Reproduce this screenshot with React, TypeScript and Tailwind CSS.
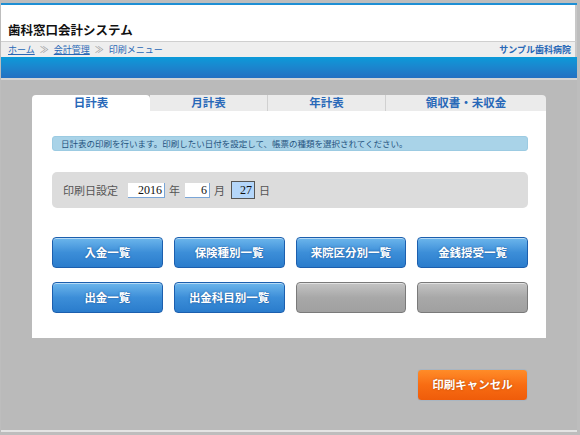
import React from "react";

const font = { fontFamily: '"Noto Sans CJK JP", "Noto Sans", sans-serif' };

function BlueBtn({ label }: { label: string }) {
  return (
    <div className="h-[31px] rounded-[4px] border border-[#1c5fae] bg-gradient-to-b from-[#6cb6ec] via-[#3c8ed8] to-[#2a7ccc] flex items-center justify-center text-white text-[11.5px] font-bold [text-shadow:0_0_2px_rgba(0,40,100,0.6)] shadow-[inset_0_1px_0_rgba(255,255,255,0.5)]">
      {label}
    </div>
  );
}

function GrayBtn() {
  return (
    <div className="h-[31px] rounded-[4px] border border-[#7a7a7a] bg-gradient-to-b from-[#c4c4c4] via-[#a8a8a8] to-[#a0a0a0] shadow-[inset_0_1px_0_rgba(255,255,255,0.5)]" />
  );
}

export default function App() {
  return (
    <div className="w-[580px] h-[435px] bg-[#bdbdbd] pt-[3px] pl-[1px] pr-[3px] overflow-hidden" style={font}>
      <div className="w-[576px] h-[429px] border-b-2 border-[#e4e4e4] bg-[#bababa] flex flex-col">
        <div className="h-[2px] bg-[#1e8fd4]" />
        <div className="h-[36px] bg-white flex items-end px-[7px] pb-[3px] border-r-2 border-[#c8c8c8]">
          <span className="text-[12.5px] font-bold text-[#111] leading-none mb-[2px]">歯科窓口会計システム</span>
        </div>
        <div className="h-[16px] bg-[#eeeeee] border-t border-[#cfcfcf] flex items-center justify-between pl-[7px] pr-[4px] text-[9px] text-[#2767b6] border-r-2 border-r-[#c8c8c8]">
          <div className="flex items-center gap-[5px]">
            <span className="underline">ホーム</span>
            <span className="text-[#9a9a9a]">≫</span>
            <span className="underline">会計管理</span>
            <span className="text-[#9a9a9a]">≫</span>
            <span className="text-[#2767b6]">印刷メニュー</span>
          </div>
          <span className="font-bold">サンプル歯科病院</span>
        </div>
        <div className="h-[21px] bg-gradient-to-b from-[#0a9ad9] to-[#2370c2]" />
        <div className="h-[2px] bg-[#d4d4d4]" />
        <div className="flex-1 pt-[15px] pl-[31px]">
          <div className="w-[514px]">
            <div className="flex h-[16px] items-stretch">
              <div className="w-[118px] bg-white rounded-t-[4px] flex items-center justify-center text-[11.5px] font-bold text-[#2868b8]">日計表</div>
              <div className="w-[118px] bg-[#ebebeb] border-r border-[#d0d0d0] flex items-center justify-center text-[11.5px] font-bold text-[#2868b8]">月計表</div>
              <div className="w-[118px] bg-[#ebebeb] border-r border-[#d0d0d0] flex items-center justify-center text-[11.5px] font-bold text-[#2868b8]">年計表</div>
              <div className="flex-1 bg-[#ebebeb] rounded-tr-[4px] flex items-center justify-center text-[11.5px] font-bold text-[#2868b8]">領収書・未収金</div>
            </div>
            <div className="bg-white pt-[25px] pb-[25px] pl-[20px] pr-[18px]">
              <div className="h-[15px] rounded-[3px] bg-[#a9d3e8] border border-[#9ccbe2] flex items-center px-[8px] text-[8.5px] text-[#24527e] whitespace-nowrap">
                日計表の印刷を行います。印刷したい日付を設定して、帳票の種類を選択されてください。
              </div>
              <div className="mt-[21px] h-[36px] rounded-[5px] bg-[#dcdcdc] flex items-center pl-[11px] text-[11px] text-[#555]">
                <span className="mr-[10px]">印刷日設定</span>
                <div className="w-[37px] h-[15px] bg-white border-r border-b border-[#7aa6d8] flex items-center justify-end pr-[2px] text-[12px] text-[#111] font-['Liberation_Serif',serif]">2016</div>
                <span className="ml-[4px] mr-[5px]">年</span>
                <div className="w-[25px] h-[15px] bg-white border-r border-b border-[#7aa6d8] flex items-center justify-end pr-[2px] text-[12px] text-[#111] font-['Liberation_Serif',serif]">6</div>
                <span className="ml-[4px] mr-[6px]">月</span>
                <div className="w-[24px] h-[18px] bg-[#b4d6fa] border border-[#555] flex items-center justify-end pr-[2px] text-[12px] text-[#111] font-['Liberation_Serif',serif]">27</div>
                <span className="ml-[4px]">日</span>
              </div>
              <div className="mt-[29px] grid grid-cols-4 gap-x-[11px] gap-y-[14px]">
                <BlueBtn label="入金一覧" />
                <BlueBtn label="保険種別一覧" />
                <BlueBtn label="来院区分別一覧" />
                <BlueBtn label="金銭授受一覧" />
                <BlueBtn label="出金一覧" />
                <BlueBtn label="出金科目別一覧" />
                <GrayBtn />
                <GrayBtn />
              </div>
            </div>
            <div className="mt-[31px] flex justify-end pr-[18px]">
              <div className="w-[111px] h-[32px] rounded-[4px] border border-[#a9b6c2] bg-gradient-to-b from-[#ff8c28] via-[#f86c12] to-[#ef5c0a] flex items-center justify-center text-white text-[11.5px] font-bold [text-shadow:0_0_2px_rgba(120,40,0,0.6)]">
                印刷キャンセル
              </div>
            </div>
          </div>
        </div>
      </div>
    </div>
  );
}
